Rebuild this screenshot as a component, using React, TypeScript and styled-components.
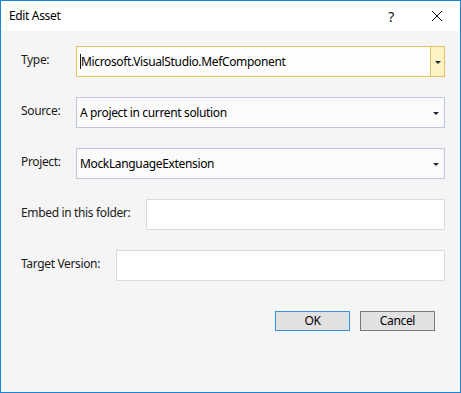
import React from 'react';
import styled, {createGlobalStyle} from "styled-components";

const GlobalStyle = createGlobalStyle`
  html, body {
    margin: 0;
    padding: 0;
    background: #ffffff;
  }
  * {
    box-sizing: border-box;
  }
`;

const Window = styled.div`
  width: 461px;
  height: 393px;
  border: 1px solid #1883d7;
  display: flex;
  flex-direction: column;
  font-family: "Noto Sans", "Open Sans", sans-serif;
  font-size: 12px;
  letter-spacing: -0.35px;
  color: #000;
`;

const TitleBar = styled.div`
  height: 30px;
  flex: none;
  background: #fff;
  display: flex;
  align-items: center;
`;

const Title = styled.div`
  flex: 1;
  padding-left: 8px;
  padding-bottom: 1px;
  font-size: 12px;
`;

const CaptionButton = styled.div`
  width: 46px;
  height: 30px;
  display: flex;
  align-items: center;
  justify-content: center;
  font-size: 14px;
  color: #111;
`;

const Body = styled.div`
  flex: 1;
  background: #f5f5f5;
  padding: 15px 15px 0 20px;
  display: flex;
  flex-direction: column;
  gap: 20px;
`;

const Row = styled.div`
  display: flex;
  align-items: center;
  height: 31px;
`;

const Label = styled.div<{ $width?: number }>`
  flex: none;
  width: ${props => props.$width ? `${props.$width}px` : 'auto'};
  margin-right: ${props => props.$width ? '0' : '16px'};
  padding-bottom: 4px;
  color: #1a1a1a;
  white-space: nowrap;
`;

const Field = styled.div<{ $border: string; $bg: string }>`
  flex: 1;
  height: 31px;
  border: 1px solid ${props => props.$border};
  background: ${props => props.$bg};
  display: flex;
  align-items: center;
  padding-left: 3px;
  white-space: nowrap;
  overflow: hidden;
`;

const FieldText = styled.span`
  flex: 1;
  padding-bottom: 1px;
`;

const Caret = styled.span`
  width: 1px;
  height: 15px;
  background: #111;
  flex: none;
`;

const DropButton = styled.div<{ $active?: boolean }>`
  width: 14px;
  height: 100%;
  flex: none;
  display: flex;
  align-items: center;
  justify-content: center;
  background: ${props => props.$active ? '#fff2c1' : 'transparent'};
  border-left: 1px solid ${props => props.$active ? '#e5c365' : 'transparent'};
  margin-right: ${props => props.$active ? '0' : '2px'};
`;

const Arrow = styled.span`
  width: 0;
  height: 0;
  border-left: 3px solid transparent;
  border-right: 3px solid transparent;
  border-top: 3px solid #1e2530;
  margin-top: 2px;
`;

const Buttons = styled.div`
  display: flex;
  justify-content: flex-end;
  gap: 10px;
  padding-top: 10px;
  padding-right: 10px;
`;

const Button = styled.div<{ $default?: boolean }>`
  width: 75px;
  height: 20px;
  background: #e1e1e1;
  border: 1px solid ${props => props.$default ? '#3c8fe3' : '#7a7a7a'};
  display: flex;
  align-items: center;
  justify-content: center;
  padding-bottom: 1px;
`;

function Combo({text, active, caret}: { text: string; active?: boolean; caret?: boolean }) {
    return (
        <Field $border={active ? '#e5c365' : '#bcc8da'} $bg={active ? '#fdfdfd' : '#fbfbfb'}>
            {caret && <Caret/>}
            <FieldText>{text}</FieldText>
            <DropButton $active={active}><Arrow/></DropButton>
        </Field>
    );
}

function App() {
    return (
        <>
            <GlobalStyle/>
            <Window>
                <TitleBar>
                    <Title>Edit Asset</Title>
                    <CaptionButton>?</CaptionButton>
                    <CaptionButton>
                        <svg width="10" height="10" viewBox="0 0 10 10">
                            <path d="M0 0L10 10M10 0L0 10" stroke="#111" strokeWidth="1"/>
                        </svg>
                    </CaptionButton>
                </TitleBar>
                <Body>
                    <Row>
                        <Label $width={55}>Type:</Label>
                        <Combo text="Microsoft.VisualStudio.MefComponent" active caret/>
                    </Row>
                    <Row>
                        <Label $width={55}>Source:</Label>
                        <Combo text="A project in current solution"/>
                    </Row>
                    <Row>
                        <Label $width={55}>Project:</Label>
                        <Combo text="MockLanguageExtension"/>
                    </Row>
                    <Row>
                        <Label>Embed in this folder:</Label>
                        <Field $border="#d9d9e6" $bg="#ffffff"/>
                    </Row>
                    <Row>
                        <Label>Target Version:</Label>
                        <Field $border="#d9d9e6" $bg="#ffffff"/>
                    </Row>
                    <Buttons>
                        <Button $default>OK</Button>
                        <Button>Cancel</Button>
                    </Buttons>
                </Body>
            </Window>
        </>
    );
}

export default App;
